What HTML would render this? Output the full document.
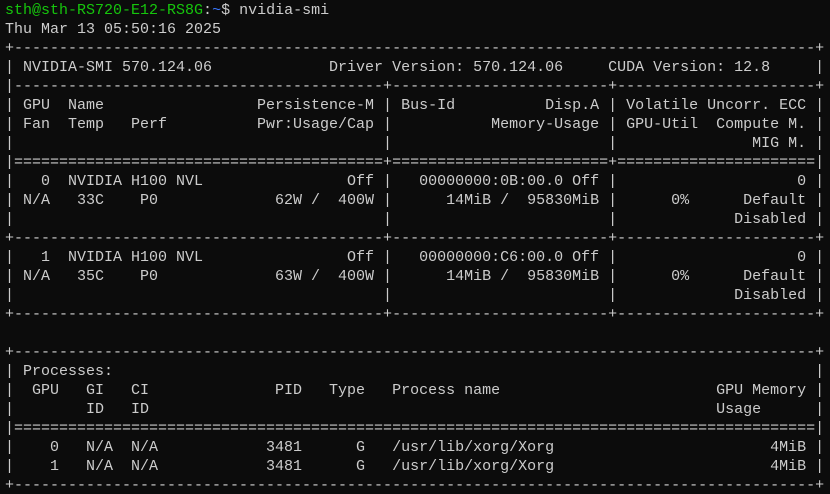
<!DOCTYPE html>
<html><head><meta charset="utf-8"><style>
html,body{margin:0;padding:0;background:#0c0c0c;width:830px;height:494px;overflow:hidden}
pre{margin:0;padding:1px 0 0 5px;font-family:"Liberation Mono",monospace;font-size:15px;line-height:19px;color:#cccccc;white-space:pre}
.g{color:#16c60c}.b{color:#3b78ff}
</style></head><body><pre><span class="g">sth@sth-RS720-E12-RS8G</span>:<span class="b">~</span>$ nvidia-smi
Thu Mar 13 05:50:16 2025
+-----------------------------------------------------------------------------------------+
| NVIDIA-SMI 570.124.06             Driver Version: 570.124.06     CUDA Version: 12.8     |
|-----------------------------------------+------------------------+----------------------+
| GPU  Name                 Persistence-M | Bus-Id          Disp.A | Volatile Uncorr. ECC |
| Fan  Temp   Perf          Pwr:Usage/Cap |           Memory-Usage | GPU-Util  Compute M. |
|                                         |                        |               MIG M. |
|=========================================+========================+======================|
|   0  NVIDIA H100 NVL                Off |   00000000:0B:00.0 Off |                    0 |
| N/A   33C    P0             62W /  400W |      14MiB /  95830MiB |      0%      Default |
|                                         |                        |             Disabled |
+-----------------------------------------+------------------------+----------------------+
|   1  NVIDIA H100 NVL                Off |   00000000:C6:00.0 Off |                    0 |
| N/A   35C    P0             63W /  400W |      14MiB /  95830MiB |      0%      Default |
|                                         |                        |             Disabled |
+-----------------------------------------+------------------------+----------------------+

+-----------------------------------------------------------------------------------------+
| Processes:                                                                              |
|  GPU   GI   CI              PID   Type   Process name                        GPU Memory |
|        ID   ID                                                               Usage      |
|=========================================================================================|
|    0   N/A  N/A            3481      G   /usr/lib/xorg/Xorg                        4MiB |
|    1   N/A  N/A            3481      G   /usr/lib/xorg/Xorg                        4MiB |
+-----------------------------------------------------------------------------------------+</pre></body></html>
